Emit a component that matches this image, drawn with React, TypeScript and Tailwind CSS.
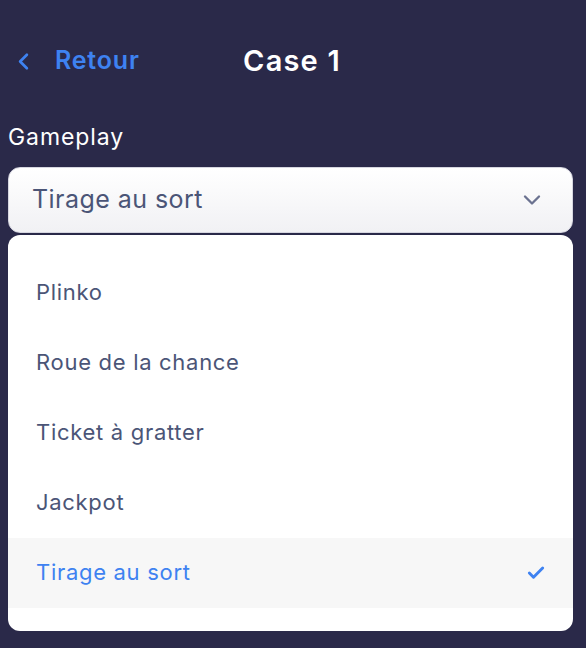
import { ChevronDown, ChevronLeft, Check } from 'lucide-react'

const OPTIONS = ['Plinko', 'Roue de la chance', 'Ticket à gratter', 'Jackpot', 'Tirage au sort']
const SELECTED = 'Tirage au sort'

export default function App() {
  return (
    <div
      className="min-h-[648px] w-full bg-[#2a2949] pl-2 pr-[13px]"
      style={{ fontFamily: 'Inter, "Noto Sans", sans-serif' }}
    >
      <header className="relative flex h-[120px] items-center">
        <div className="flex h-[120px] w-full items-center pt-[2px]">
          <button className="flex items-center gap-[18px] pl-[2px] text-[#3e82f1]">
            <ChevronLeft size={27} strokeWidth={2.4} />
            <span className="text-[25px] font-semibold tracking-[0.8px]">Retour</span>
          </button>
        </div>
        <h1 className="absolute left-0 right-0 pl-[3px] pt-[2px] text-center text-[29px] font-semibold tracking-[1.2px] text-white">
          Case 1
        </h1>
      </header>

      <div>
        <label className="block text-[23px] tracking-[0.9px] text-white">Gameplay</label>
        <button className="mt-[12px] flex h-[66px] w-full items-center justify-between rounded-[12px] border border-[#d6d6e0] bg-gradient-to-b from-white to-[#f1f1f4] pl-[23px] pr-[26px] text-left">
          <span className="text-[25px] tracking-[0.45px] text-[#4b5577]">{SELECTED}</span>
          <ChevronDown size={28} strokeWidth={2} className="text-[#6b7290]" />
        </button>
      </div>

      <ul className="mt-[2px] rounded-[12px] bg-white py-[23px]">
        {OPTIONS.map((option) => {
          const active = option === SELECTED
          return (
            <li
              key={option}
              className={`flex h-[70px] items-center justify-between pl-[28px] pr-[27px] text-[22px] tracking-[0.7px] ${
                active ? 'bg-[#f7f7f7] text-[#3e82f1]' : 'text-[#4b5577]'
              }`}
            >
              <span>{option}</span>
              {active && <Check size={20} strokeWidth={3.5} />}
            </li>
          )
        })}
      </ul>
    </div>
  )
}
